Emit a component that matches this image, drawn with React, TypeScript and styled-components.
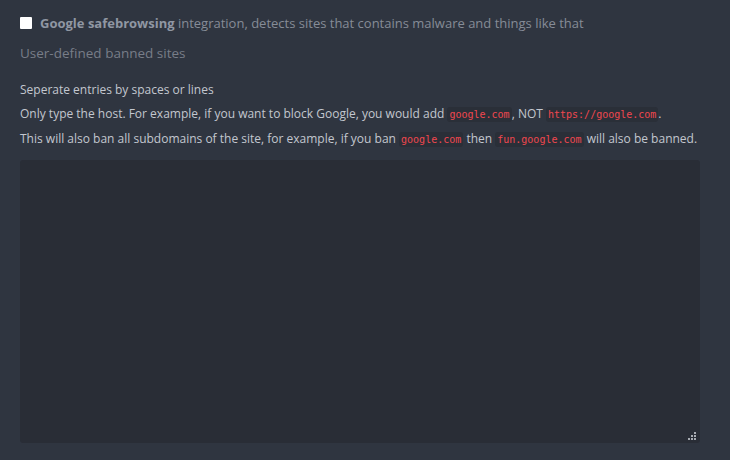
import React from "react";
import styled, { createGlobalStyle } from "styled-components";

const Global = createGlobalStyle`
  html, body { margin: 0; padding: 0; background: #2f3540; }
  body { font-family: "Open Sans", "Noto Sans", sans-serif; }
`;

const Page = styled.div`
  width: 730px;
  height: 460px;
  box-sizing: border-box;
  padding: 14px 30px 17px 20px;
  background: #2f3540;
  display: flex;
  flex-direction: column;
`;

const CheckRow = styled.label`
  display: flex;
  align-items: center;
  gap: 8px;
  font-size: 13px;
  line-height: 18px;
  color: #868c97;
`;

const Box = styled.span`
  width: 12px;
  height: 12px;
  background: #ffffff;
  border-radius: 1px;
  flex: none;
`;

const Strong = styled.b`
  font-weight: 700;
  color: #9097a3;
`;

const Heading = styled.div`
  margin-top: 12px;
  font-size: 13.5px;
  line-height: 18px;
  color: #787d88;
`;

const Notes = styled.div`
  margin-top: 19px;
  display: flex;
  flex-direction: column;
  gap: 6px;
`;

const Note = styled.p`
  margin: 0;
  font-size: 12px;
  line-height: 18px;
  color: #c3c7cf;
  white-space: nowrap;
`;

const Code = styled.code`
  font-family: "DejaVu Sans Mono", "Liberation Mono", monospace;
  font-size: 10px;
  color: #f0474f;
  background: #2a2f38;
  padding: 2px 2px;
  border-radius: 3px;
`;

const AreaWrap = styled.div`
  margin-top: 11px;
  flex: 1;
  position: relative;
  display: flex;
`;

const Area = styled.textarea`
  flex: 1;
  width: 100%;
  box-sizing: border-box;
  background: #292d36;
  border: none;
  border-radius: 3px;
  outline: none;
  color: #c3c7cf;
  font-family: "Open Sans", sans-serif;
  font-size: 12px;
  resize: none;
`;

const Grip = styled.svg`
  position: absolute;
  right: 4px;
  bottom: 3px;
  width: 8px;
  height: 8px;
  pointer-events: none;
`;

export default function App() {
  return (
    <>
      <Global />
      <Page>
        <CheckRow>
          <Box />
          <span>
            <Strong>Google safebrowsing</Strong> integration, detects sites that contains malware and things like that
          </span>
        </CheckRow>
        <Heading>User-defined banned sites</Heading>
        <Notes>
          <Note>Seperate entries by spaces or lines</Note>
          <Note>
            Only type the host. For example, if you want to block Google, you would add <Code>google.com</Code>, NOT{" "}
            <Code>https://google.com</Code>.
          </Note>
          <Note>
            This will also ban all subdomains of the site, for example, if you ban <Code>google.com</Code> then{" "}
            <Code>fun.google.com</Code> will also be banned.
          </Note>
        </Notes>
        <AreaWrap>
          <Area spellCheck={false} />
          <Grip viewBox="0 0 8 8">
            <g fill="#a7abb2">
              <rect x="6" y="0" width="2" height="2" />
              <rect x="3" y="3" width="2" height="2" />
              <rect x="6" y="3" width="2" height="2" />
              <rect x="0" y="6" width="2" height="2" />
              <rect x="3" y="6" width="2" height="2" />
              <rect x="6" y="6" width="2" height="2" />
            </g>
          </Grip>
        </AreaWrap>
      </Page>
    </>
  );
}
